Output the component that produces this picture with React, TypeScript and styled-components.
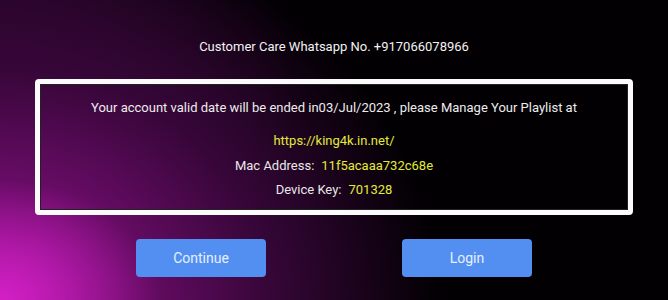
import styled, { createGlobalStyle } from 'styled-components';

const GlobalStyle = createGlobalStyle`
  html, body {
    margin: 0;
    padding: 0;
    background: #000;
  }
  body {
    font-family: Roboto, 'Liberation Sans', sans-serif;
  }
`;

const Screen = styled.div`
  width: 668px;
  height: 300px;
  box-sizing: border-box;
  padding-top: 38px;
  display: flex;
  flex-direction: column;
  align-items: center;
  overflow: hidden;
  background:
    radial-gradient(ellipse 160px 120px at 0% 100%, rgba(220, 34, 205, 0.85) 0%, rgba(200, 28, 190, 0) 100%),
    radial-gradient(ellipse 440px 380px at 0% 100%, #a0129a 0%, #6a0c68 30%, #350637 62%, rgba(10, 0, 10, 0) 100%),
    radial-gradient(ellipse 300px 260px at 0% 30%, rgba(55, 6, 55, 0.8) 0%, rgba(0, 0, 0, 0) 100%),
    #020003;
`;

const Header = styled.div`
  color: #f2f2f2;
  font-size: 13px;
  line-height: 18px;
`;

const InfoBox = styled.div`
  margin-top: 23px;
  width: 598px;
  height: 136px;
  box-sizing: border-box;
  border: 5px solid #fbfbfb;
  border-radius: 4px;
  box-shadow: inset 0 0 0 1px #222;
  display: flex;
  flex-direction: column;
  align-items: center;
  padding-top: 15px;
`;

const Notice = styled.div`
  color: #ececec;
  font-size: 13px;
  line-height: 18px;
  margin-bottom: 15px;
`;

const Row = styled.div`
  display: flex;
  gap: 7px;
  font-size: 13px;
  line-height: 18px;
  height: 24.5px;
`;

const Label = styled.span`
  color: #e8e8e8;
`;

const Value = styled.span`
  color: #e2ea3a;
`;

const Buttons = styled.div`
  margin-top: 24px;
  display: flex;
  gap: 136px;
`;

const Button = styled.button`
  width: 130px;
  height: 38px;
  border: none;
  border-radius: 4px;
  background: #538ff0;
  color: #e6efff;
  font-family: Roboto, 'Liberation Sans', sans-serif;
  font-size: 14px;
  padding: 0;
  cursor: pointer;
`;

export default function App() {
  return (
    <>
      <GlobalStyle />
      <Screen>
        <Header>Customer Care Whatsapp No. +917066078966</Header>
        <InfoBox>
          <Notice>
            Your account valid date will be ended in03/Jul/2023 , please Manage Your Playlist at
          </Notice>
          <Row>
            <Value>https://king4k.in.net/</Value>
          </Row>
          <Row>
            <Label>Mac Address:</Label>
            <Value>11f5acaaa732c68e</Value>
          </Row>
          <Row>
            <Label>Device Key:</Label>
            <Value>701328</Value>
          </Row>
        </InfoBox>
        <Buttons>
          <Button>Continue</Button>
          <Button>Login</Button>
        </Buttons>
      </Screen>
    </>
  );
}
